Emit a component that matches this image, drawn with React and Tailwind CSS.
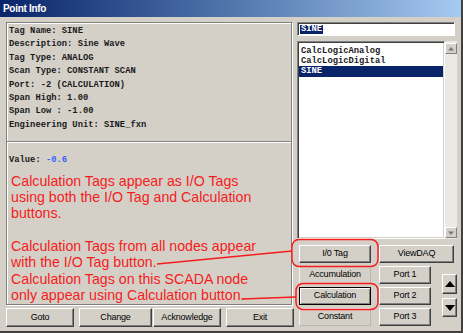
import React from 'react';

const mono = { fontFamily: '"Liberation Mono", "Courier New", monospace' };
const sys = { fontFamily: '"Liberation Sans", Arial, sans-serif' };
const arial = { fontFamily: '"Liberation Sans", Arial, sans-serif' };

const Btn = ({ children, className = '', flat = false, def = false }) => (
    <div
        style={sys}
        className={`flex items-center justify-center bg-[#d4d0c8] text-[9px] tracking-[-0.2px] text-black ${
            flat
                ? 'border border-t-[#f4f3f0] border-l-[#f4f3f0] border-r-[#bcb8b0] border-b-[#bcb8b0]'
                : def
                ? 'border border-black shadow-[inset_1px_1px_0_#fff,inset_-1px_-1px_0_#808080]'
                : 'border border-t-white border-l-white border-r-[#404040] border-b-[#404040] shadow-[inset_-1px_-1px_0_#808080]'
        } ${className}`}
    >
        {children}
    </div>
);

const info = [
    'Tag Name: SINE',
    'Description: Sine Wave',
    'Tag Type: ANALOG',
    'Scan Type: CONSTANT SCAN',
    'Port: -2 (CALCULATION)',
    'Span High: 1.00',
    'Span Low : -1.00',
    'Engineering Unit: SINE_fxn',
];

const tags = ['CalcLogicAnalog', 'CalcLogicDigital', 'SINE'];

const App = () => {
    return (
        <div className="relative w-[463px] h-[333px] overflow-hidden bg-[#d4d0c8] border-r-2 border-b-2 border-r-[#404040] border-b-[#404040]">
            {/* title bar */}
            <div
                style={sys}
                className="h-[17px] flex items-center pl-[3px] bg-linear-to-r from-[#0a246a] to-[#a6caf0] text-white font-bold text-[10px] tracking-[-0.3px]"
            >
                Point Info
            </div>

            <div className="flex pt-[5px]">
                {/* left column */}
                <div className="ml-[6px] w-[288px] flex flex-col">
                    <div className="h-[283px] w-[286px] border border-[#808080] shadow-[inset_1px_1px_0_#fff,1px_1px_0_#fff] flex flex-col">
                        <div style={mono} className="pt-[2px] pl-[2px] text-[8.8px] font-bold leading-[13.4px] text-[#1a1a1a]">
                            {info.map((l) => (
                                <div key={l} className="whitespace-pre">{l}</div>
                            ))}
                        </div>
                        <div className="mt-[9px] h-[2px] border-t border-t-[#808080] border-b border-b-white" />
                        <div style={mono} className="mt-[11px] pl-[2px] text-[8.8px] font-bold leading-[13.4px] text-[#1a1a1a] whitespace-pre">
                            Value: <span className="text-[#3a5cff]">-0.6</span>
                        </div>
                        <div style={arial} className="mt-[5px] pl-[4px] text-[14.2px] leading-[16px] text-[#f51c1c]">
                            <div>Calculation Tags appear as I/O Tags</div>
                            <div>using both the I/O Tag and Calculation</div>
                            <div>buttons.</div>
                        </div>
                        <div style={arial} className="mt-[17px] pl-[4px] text-[14.2px] leading-[16.6px] text-[#f51c1c]">
                            <div>Calculation Tags from all nodes appear</div>
                            <div>with the I/O Tag button.</div>
                            <div>Calculation Tags on this SCADA node</div>
                            <div>only appear using Calculation button.</div>
                        </div>
                    </div>
                    <div className="mt-[3px] flex h-[19px]">
                        <Btn className="w-[68px]">Goto</Btn>
                        <Btn className="w-[73px] ml-[5px]">Change</Btn>
                        <Btn className="w-[68px] ml-[1px]">Acknowledge</Btn>
                        <Btn className="w-[68px] ml-[5px]">Exit</Btn>
                    </div>
                </div>

                {/* right column */}
                <div className="ml-[3px] w-[160px] flex flex-col">
                    <div className="h-[14px] w-[158px] bg-white border border-t-[#808080] border-l-[#808080] border-r-white border-b-white shadow-[inset_1px_1px_0_#404040] flex items-center pl-[2px]">
                        <span style={mono} className="bg-[#0a246a] text-white text-[8.8px] font-bold leading-[9px] px-[1px]">
                            SINE
                        </span>
                    </div>

                    <div className="mt-[5px] h-[198px] flex">
                        <div className="w-[148px] h-full bg-white border border-t-[#808080] border-l-[#808080] border-r-white border-b-white shadow-[inset_1px_1px_0_#404040,inset_-1px_-1px_0_#d4d0c8] pt-[4px] px-[1px]">
                            {tags.map((t) => (
                                <div
                                    key={t}
                                    style={mono}
                                    className={`h-[10px] pl-[2px] text-[8.8px] font-bold leading-[10px] ${
                                        t === 'SINE' ? 'bg-[#0a246a] text-white h-[11px]' : 'text-[#1a1a1a]'
                                    }`}
                                >
                                    {t}
                                </div>
                            ))}
                        </div>
                        <div className="w-[12px] h-full bg-[#ebe9e5] flex flex-col justify-between pt-[2px] pb-[1px]">
                            <div className="h-[11px] bg-[#d4d0c8] border border-t-white border-l-white border-r-[#808080] border-b-[#808080] flex items-center justify-center">
                                <svg width="6" height="4" viewBox="0 0 6 4"><path d="M3 0 L6 3.5 L0 3.5 Z" fill="#777" /></svg>
                            </div>
                            <div className="h-[11px] bg-[#d4d0c8] border border-t-white border-l-white border-r-[#808080] border-b-[#808080] flex items-center justify-center">
                                <svg width="6" height="4" viewBox="0 0 6 4"><path d="M0 0.5 L6 0.5 L3 4 Z" fill="#777" /></svg>
                            </div>
                        </div>
                    </div>

                    <div className="mt-[6px] flex">
                        <div className="ml-[2px] w-[73px] flex flex-col gap-[3px]">
                            <Btn className="h-[18px]">I/0 Tag</Btn>
                            <Btn flat className="h-[18px]">Accumulation</Btn>
                            <Btn def className="h-[18px]">Calculation</Btn>
                            <Btn flat className="h-[18px]">Constant</Btn>
                        </div>
                        <div className="ml-[8px] flex flex-col gap-[3px]">
                            <Btn className="h-[18px] w-[75px]">ViewDAQ</Btn>
                            <div className="flex">
                                <div className="w-[52px] flex flex-col gap-[3px]">
                                    <Btn className="h-[18px]">Port 1</Btn>
                                    <Btn className="h-[18px]">Port 2</Btn>
                                    <Btn className="h-[18px]">Port 3</Btn>
                                </div>
                                <div className="ml-[11px] w-[15px] flex flex-col pt-[8px] gap-[4px]">
                                    <Btn className="h-[20px]">
                                        <svg width="10" height="6" viewBox="0 0 10 6"><path d="M5 0 L10 6 L0 6 Z" fill="#000" /></svg>
                                    </Btn>
                                    <Btn className="h-[19px]">
                                        <svg width="10" height="6" viewBox="0 0 10 6"><path d="M0 0 L10 0 L5 6 Z" fill="#000" /></svg>
                                    </Btn>
                                </div>
                            </div>
                        </div>
                    </div>
                </div>
            </div>

            {/* red annotations */}
            <svg className="absolute inset-0 pointer-events-none" width="463" height="333" viewBox="0 0 463 333">
                <rect x="292" y="239.5" width="86" height="27" rx="7" fill="none" stroke="#f51c1c" strokeWidth="1.5" />
                <rect x="296" y="283.5" width="82" height="26" rx="7" fill="none" stroke="#f51c1c" strokeWidth="1.5" />
                <line x1="157" y1="264" x2="292" y2="251" stroke="#f51c1c" strokeWidth="1.3" />
                <line x1="242" y1="299" x2="296" y2="297" stroke="#f51c1c" strokeWidth="1.3" />
            </svg>
        </div>
    );
};

export default App;
